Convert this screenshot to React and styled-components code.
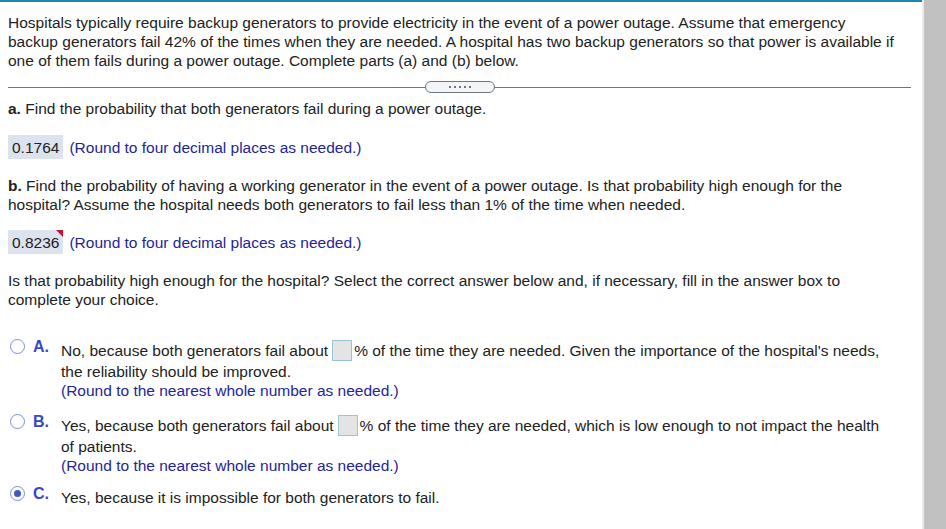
import React from "react";
import styled, { createGlobalStyle } from "styled-components";

const Global = createGlobalStyle`
  html, body {
    margin: 0;
    padding: 0;
    background: #ffffff;
  }
  body {
    font-family: "Liberation Sans", Arial, sans-serif;
    font-size: 15.5px;
    color: #222;
  }
`;

const Page = styled.div`
  display: flex;
  width: 946px;
  height: 529px;
  overflow: hidden;
`;

const Main = styled.div`
  width: 922px;
  border-top: 2px solid #1b87b0;
  box-sizing: border-box;
  padding: 11px 10px 0 8px;
  line-height: 19px;
`;

const Scrollbar = styled.div`
  width: 24px;
  border-left: 2px solid #ebebeb;
  background: #c1c1c1;
`;

const Para = styled.p`
  margin: ${(p) => p.$mt || 0}px 0 0;
  width: 904px;
`;

const Divider = styled.div`
  display: flex;
  align-items: center;
  width: 903px;
  margin: 11px 0 0;
  height: 12px;
`;

const Line = styled.div`
  flex: 1;
  height: 1px;
  background: #6d7680;
`;

const Pill = styled.div`
  width: 68px;
  height: 10px;
  border: 1px solid #6d7680;
  border-radius: 6px;
  background: #f3f5f8;
  display: flex;
  align-items: center;
  justify-content: center;
  gap: 3px;
`;

const Dot = styled.span`
  width: 2px;
  height: 2px;
  background: #6d7680;
`;

const AnswerRow = styled.div`
  display: flex;
  align-items: center;
  margin-top: ${(p) => p.$mt}px;
  height: 24px;
`;

const AnswerBox = styled.span`
  position: relative;
  display: inline-flex;
  align-items: center;
  height: 24px;
  padding: 0 4px 0 4px;
  background: #dce3ee;
  color: #222;
`;

const Flag = styled.span`
  position: absolute;
  top: 0;
  right: 0;
  width: 0;
  height: 0;
  border-top: 7px solid #c8102e;
  border-left: 7px solid transparent;
`;

const Hint = styled.span`
  color: #24249a;
  margin-left: ${(p) => p.$ml || 0}px;
`;

const Options = styled.div`
  margin-top: 32px;
  display: flex;
  flex-direction: column;
`;

const Option = styled.div`
  display: grid;
  grid-template-columns: 25px 28px 840px;
  margin-top: ${(p) => p.$mt || 0}px;
`;

const Radio = styled.span`
  width: 13px;
  height: 13px;
  margin: -2px 0 0 2px;
  border: 1px solid #7b8fdc;
  border-radius: 50%;
  box-sizing: content-box;
  display: flex;
  align-items: center;
  justify-content: center;
  background: #fff;
`;

const RadioDot = styled.span`
  width: 7px;
  height: 7px;
  border-radius: 50%;
  background: #3f57c9;
`;

const Letter = styled.span`
  color: #3a47c6;
  font-weight: bold;
  font-size: 16px;
  line-height: 19px;
  margin-top: -4px;
`;

const OptionText = styled.div`
  line-height: 19px;
`;

const FirstLine = styled.div`
  line-height: 22px;
  margin-top: -1px;
`;

const Blank = styled.span`
  display: inline-block;
  vertical-align: middle;
  width: 18px;
  height: 19px;
  margin: -2px 2px 0 4px;
  background: #e4e4e4;
  border: 1px solid #9dc3d6;
`;

const Bold = styled.b``;

function Choice({ letter, selected, mt, children }) {
  return (
    <Option $mt={mt}>
      <Radio>{selected && <RadioDot />}</Radio>
      <Letter>{letter}.</Letter>
      <OptionText>{children}</OptionText>
    </Option>
  );
}

export default function App() {
  return (
    <>
      <Global />
      <Page>
        <Main>
          <Para>
            Hospitals typically require backup generators to provide electricity in the event of a power outage. Assume that emergency
            <br />
            backup generators fail 42% of the times when they are needed. A hospital has two backup generators so that power is available if
            <br />
            one of them fails during a power outage. Complete parts (a) and (b) below.
          </Para>
          <Divider>
            <Line />
            <Pill>
              <Dot />
              <Dot />
              <Dot />
              <Dot />
              <Dot />
            </Pill>
            <Line />
          </Divider>
          <Para $mt={6}>
            <Bold>a.</Bold> Find the probability that both generators fail during a power outage.
          </Para>
          <AnswerRow $mt={17}>
            <AnswerBox>0.1764</AnswerBox>
            <Hint $ml={6}>(Round to four decimal places as needed.)</Hint>
          </AnswerRow>
          <Para $mt={17}>
            <Bold>b.</Bold> Find the probability of having a working generator in the event of a power outage. Is that probability high enough for the
            <br />
            hospital? Assume the hospital needs both generators to fail less than 1% of the time when needed.
          </Para>
          <AnswerRow $mt={16}>
            <AnswerBox>
              0.8236
              <Flag />
            </AnswerBox>
            <Hint $ml={6}>(Round to four decimal places as needed.)</Hint>
          </AnswerRow>
          <Para $mt={17}>
            Is that probability high enough for the hospital? Select the correct answer below and, if necessary, fill in the answer box to
            <br />
            complete your choice.
          </Para>
          <Options>
            <Choice letter="A">
              <FirstLine>
                No, because both generators fail about
                <Blank />
                % of the time they are needed. Given the importance of the hospital's needs,
              </FirstLine>
              the reliability should be improved.
              <br />
              <Hint>(Round to the nearest whole number as needed.)</Hint>
            </Choice>
            <Choice letter="B" mt={16}>
              <FirstLine>
                Yes, because both generators fail about
                <Blank />
                % of the time they are needed, which is low enough to not impact the health
              </FirstLine>
              of patients.
              <br />
              <Hint>(Round to the nearest whole number as needed.)</Hint>
            </Choice>
            <Choice letter="C" selected mt={13}>
              Yes, because it is impossible for both generators to fail.
            </Choice>
          </Options>
        </Main>
        <Scrollbar />
      </Page>
    </>
  );
}
